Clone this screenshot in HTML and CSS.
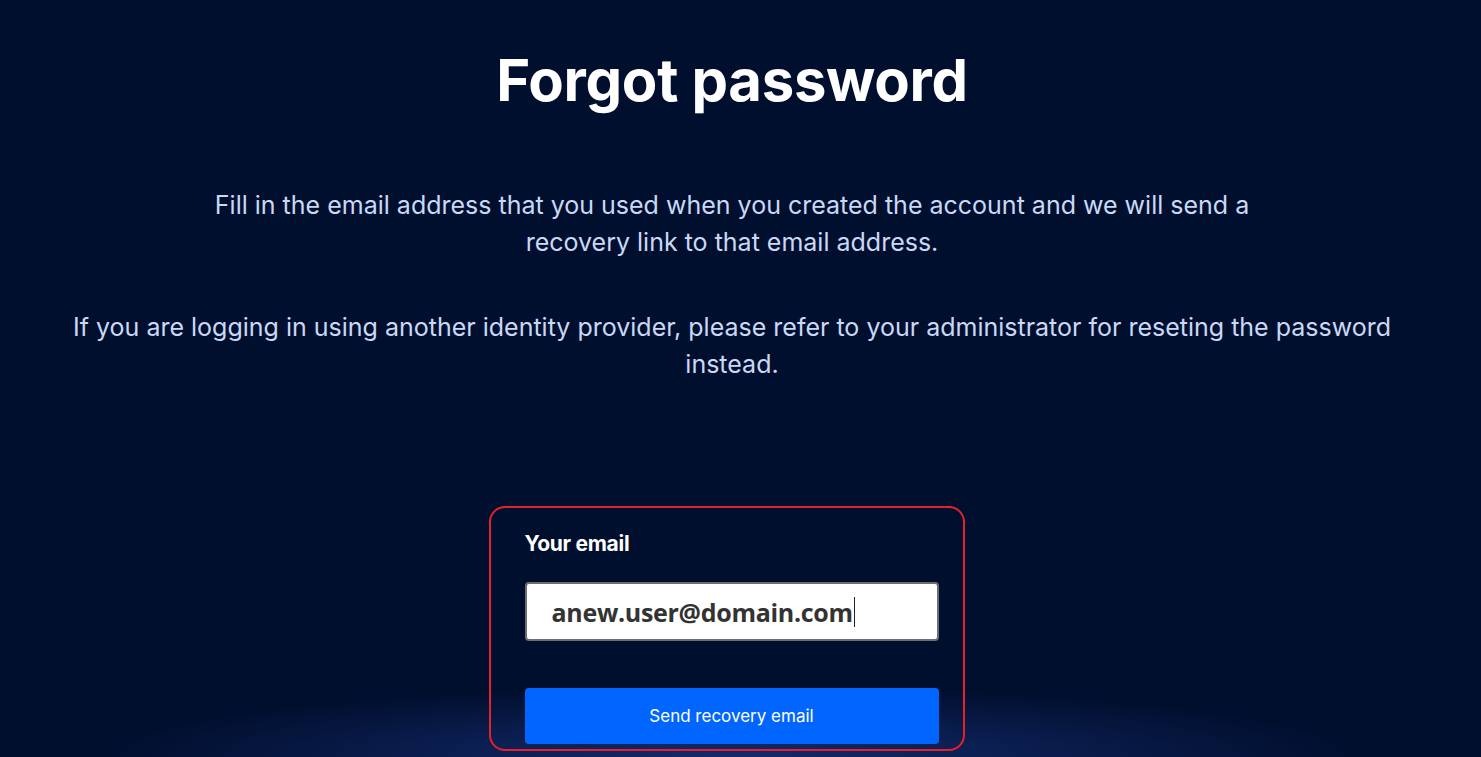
FILE: index.html
```html
<!DOCTYPE html>
<html lang="en">
<head>
    <meta charset="UTF-8">
    <meta name="viewport" content="width=device-width, initial-scale=1.0">
    <title>Forgot password</title>
    <link rel="stylesheet" href="styles.css">
</head>
<body>
    <div class="page">
        <h1 class="title">Forgot password</h1>
        <p class="intro">Fill in the email address that you used when you created the account and we will send a recovery link to that email address.</p>
        <p class="note">If you are logging in using another identity provider, please refer to your administrator for reseting the password instead.</p>

        <form class="reset-card">
            <label class="field-label" for="email">Your email</label>
            <div class="email-input">
                <span class="email-value">anew.user@domain.com</span><span class="caret"></span>
            </div>
            <button type="button" class="send-btn">Send recovery email</button>
        </form>
    </div>
</body>
</html>
```

FILE: styles.css
```css
body {
    margin: 0;
    padding: 0;
    height: 757px;
    overflow: hidden;
    background: #010f2f;
    font-family: Inter, 'Noto Sans', sans-serif;
    color: #fff;
}
.page {
    height: 100%;
    width: 1464px;
    display: flex;
    flex-direction: column;
    align-items: center;
    background: radial-gradient(ellipse 620px 70px at 50% 100%, rgba(24, 52, 128, 0.75), rgba(2, 15, 48, 0) 100%);
}
.title {
    margin: 46px 0 0;
    font-size: 58px;
    font-weight: 700;
    line-height: 68px;
    letter-spacing: -0.3px;
}
.intro,
.note {
    margin: 0;
    text-align: center;
    font-size: 25px;
    line-height: 37px;
    color: #c9d9f5;
}
.intro {
    max-width: 1080px;
    margin-top: 73px;
}
.note {
    max-width: 1340px;
    margin-top: 48px;
}
.reset-card {
    margin-top: 123px;
    margin-right: 11px;
    width: 414px;
    padding: 20px 24px 5px 34px;
    border: 2px solid #e8202a;
    border-radius: 16px;
    display: flex;
    flex-direction: column;
}
.field-label {
    font-size: 21px;
    font-weight: 700;
    line-height: 32px;
    letter-spacing: -0.3px;
}
.email-input {
    margin-top: 22px;
    height: 55px;
    background: #fff;
    border: 2px solid #6e6e6e;
    border-radius: 4px;
    display: flex;
    align-items: center;
    padding-left: 25px;
}
.email-value {
    font-family: 'Open Sans', 'Liberation Sans', sans-serif;
    font-weight: 700;
    font-size: 25px;
    letter-spacing: -0.3px;
    color: #333;
}
.caret {
    width: 1px;
    height: 30px;
    background: #222;
    margin-left: 1px;
}
.send-btn {
    margin-top: 47px;
    height: 56px;
    border: none;
    border-radius: 4px;
    background: #0066ff;
    color: #fff;
    font-family: Inter, 'Noto Sans', sans-serif;
    font-size: 17px;
}
```
